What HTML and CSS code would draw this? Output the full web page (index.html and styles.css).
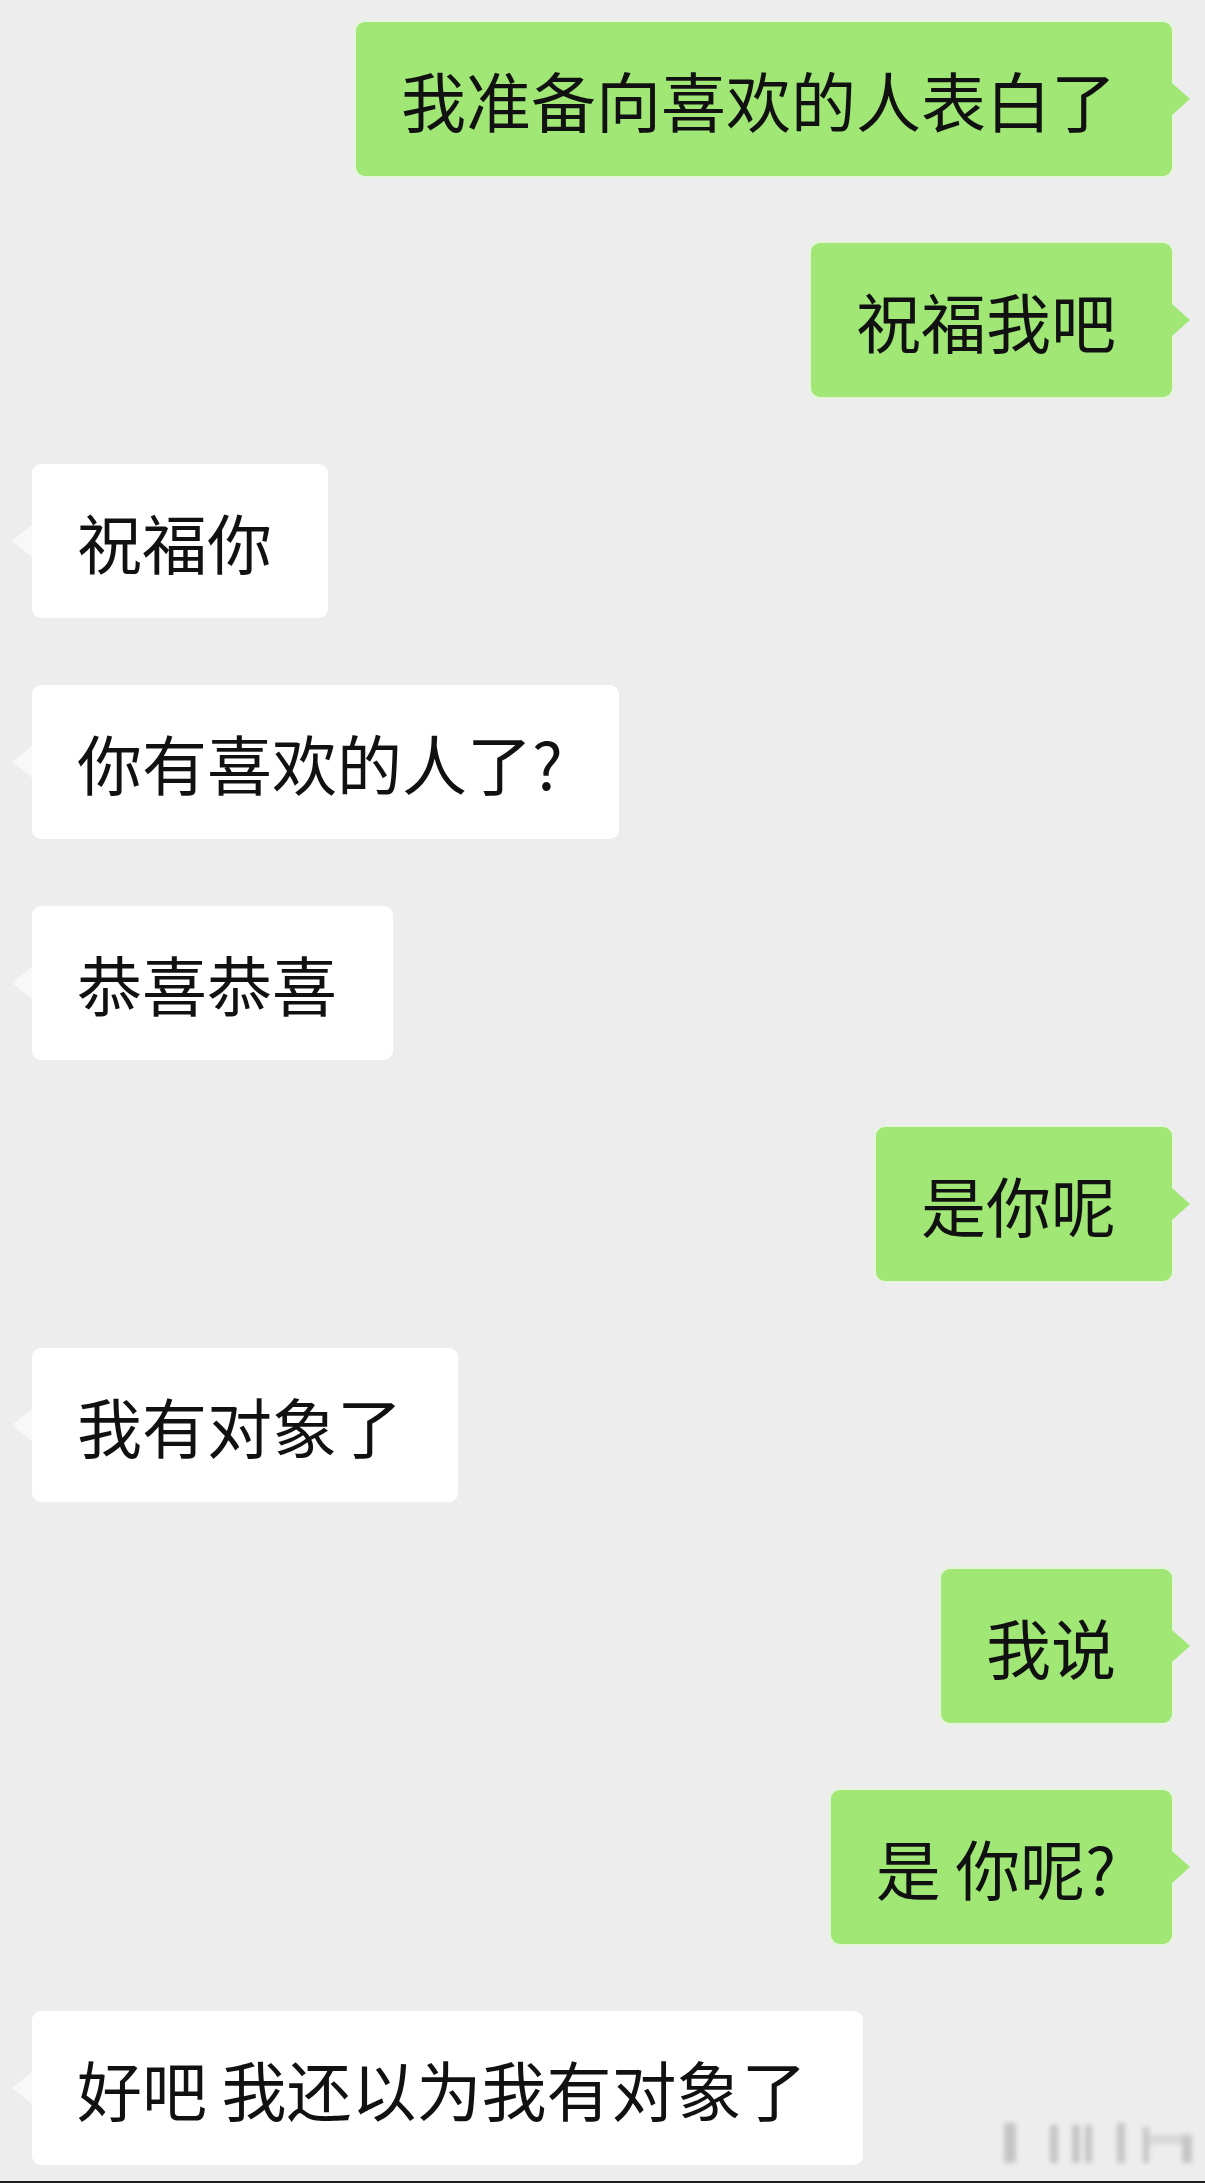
FILE: index.html
```html
<!DOCTYPE html>
<html lang="zh-CN">
<head>
    <meta charset="UTF-8">
    <title>聊天记录</title>
    <link rel="stylesheet" href="styles.css">
</head>
<body>
<div class="chat">
    <div class="row me"><div class="bubble">我准备向喜欢的人表白了</div></div>
    <div class="row me"><div class="bubble">祝福我吧</div></div>
    <div class="row other"><div class="bubble">祝福你</div></div>
    <div class="row other"><div class="bubble">你有喜欢的人了?</div></div>
    <div class="row other"><div class="bubble">恭喜恭喜</div></div>
    <div class="row me"><div class="bubble">是你呢</div></div>
    <div class="row other"><div class="bubble">我有对象了</div></div>
    <div class="row me"><div class="bubble">我说</div></div>
    <div class="row me"><div class="bubble">是 你呢?</div></div>
    <div class="row other"><div class="bubble">好吧 我还以为我有对象了</div></div>

    <!-- 右下角水印 -->
    <svg class="mark" width="205" height="60" viewBox="0 0 205 60">
        <defs>
            <filter id="blur"><feGaussianBlur stdDeviation="2.5"/></filter>
        </defs>
        <g fill="#c4c4c4" filter="url(#blur)">
            <rect x="4" y="10" width="12" height="40"/>
            <rect x="50" y="12" width="8" height="38"/>
            <rect x="72" y="12" width="8" height="38"/>
            <rect x="85" y="12" width="7" height="38"/>
            <rect x="117" y="10" width="8" height="40"/>
            <rect x="143" y="14" width="6" height="36"/>
            <rect x="148" y="22" width="44" height="9" fill="#d6d6d6"/>
            <rect x="182" y="22" width="10" height="28"/>
        </g>
    </svg>
</div>
</body>
</html>
```

FILE: styles.css
```css
*{
    margin: 0;
    padding: 0;
}
body{
    background-color: #ededed;
    font-family: "Noto Sans CJK SC", "Noto Sans", sans-serif;
}
.chat{
    position: relative;
    height: 2183px;
    box-sizing: border-box;
    padding-top: 22px;
    display: flex;
    flex-direction: column;
    gap: 67px;
    border-bottom: 2px solid #1e1e1e;
}
.row{
    display: flex;
}
.row.me{
    justify-content: flex-end;
    padding-right: 33px;
}
.row.other{
    justify-content: flex-start;
    padding-left: 32px;
}
.bubble{
    position: relative;
    font-size: 65px;
    line-height: 78px;
    padding: 38px 56px 38px 45px;
    border-radius: 9px;
    color: #111111;
    white-space: pre;
}
.me .bubble{
    background-color: #a0e776;
    box-shadow: 0 0 3px 2px rgba(226, 246, 214, 0.9);
}
.other .bubble{
    background-color: #ffffff;
}
/* 气泡小尖角 */
.bubble::after{
    content: "";
    position: absolute;
    top: 50%;
    margin-top: -16px;
    border-top: 16px solid transparent;
    border-bottom: 16px solid transparent;
}
.me .bubble::after{
    left: 100%;
    border-left: 18px solid #a0e776;
}
.other .bubble::after{
    right: 100%;
    border-right: 20px solid #f8f8f8;
}
.mark{
    position: absolute;
    right: 0;
    bottom: 8px;
}
```
